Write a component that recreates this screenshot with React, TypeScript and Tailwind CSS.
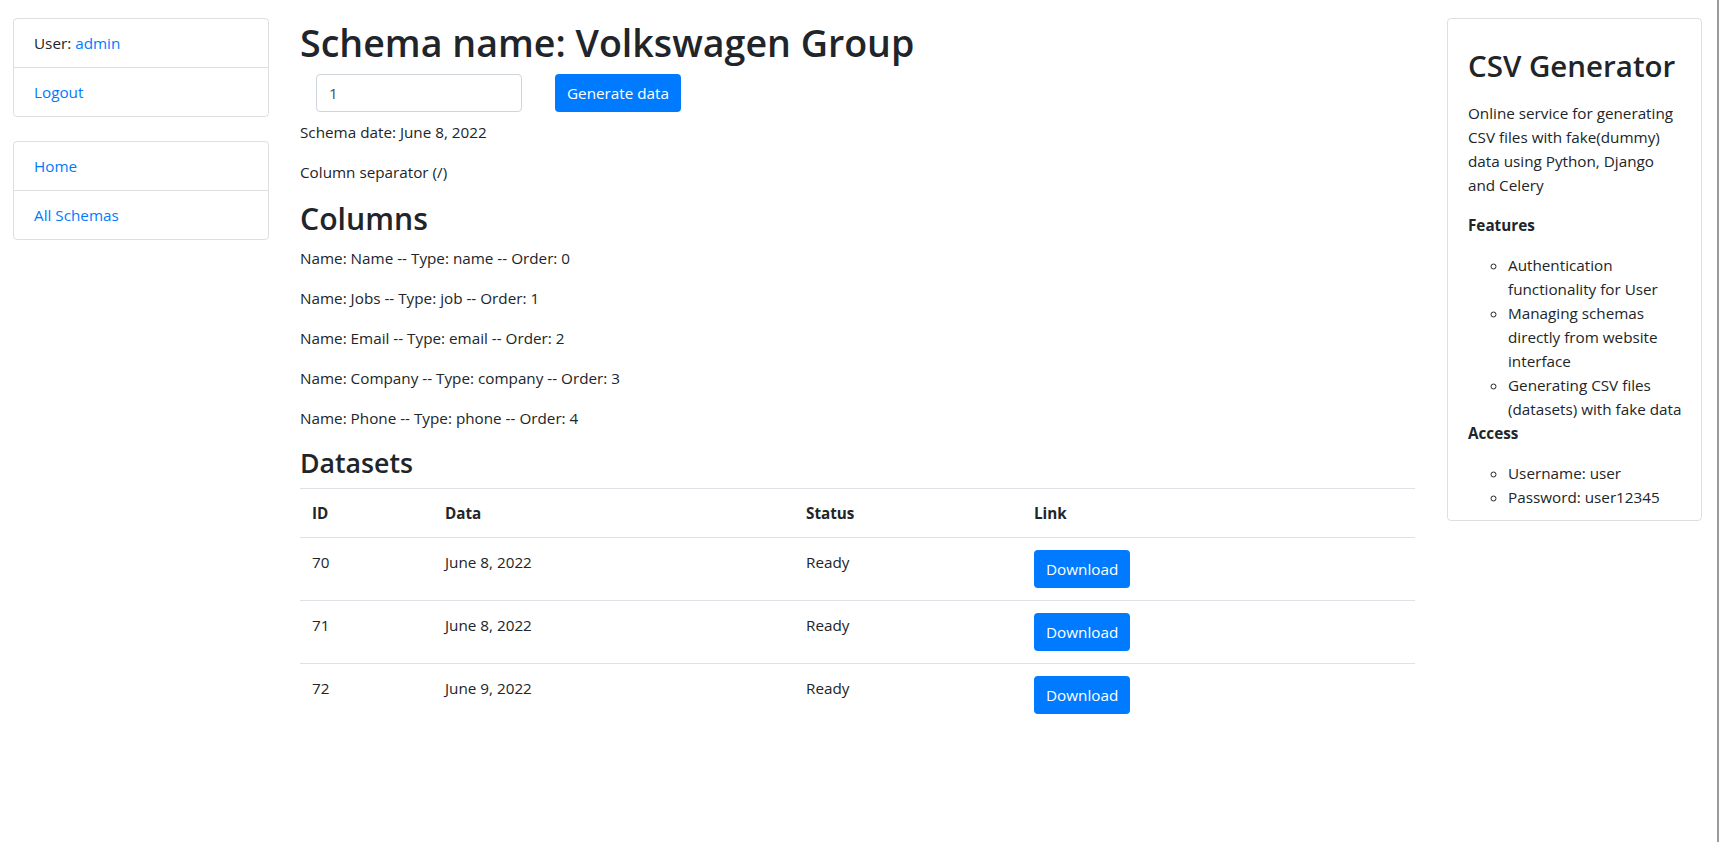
import React from 'react';

const columns = [
  { name: 'Name', type: 'name', order: 0 },
  { name: 'Jobs', type: 'job', order: 1 },
  { name: 'Email', type: 'email', order: 2 },
  { name: 'Company', type: 'company', order: 3 },
  { name: 'Phone', type: 'phone', order: 4 },
];

const datasets = [
  { id: 70, date: 'June 8, 2022', status: 'Ready' },
  { id: 71, date: 'June 8, 2022', status: 'Ready' },
  { id: 72, date: 'June 9, 2022', status: 'Ready' },
];

function ListGroup({ children }: { children: React.ReactNode[] }) {
  return (
    <div className="border border-black/[.125] rounded">
      {children.map((c, i) => (
        <div key={i} className={`px-5 py-3 ${i > 0 ? 'border-t border-black/[.125]' : ''}`}>
          {c}
        </div>
      ))}
    </div>
  );
}

export default function App() {
  return (
    <div className="flex h-[842px] bg-white text-[#212529] font-['Open_Sans','Noto_Sans',sans-serif] text-[15.25px] leading-6">
      <div className="flex w-[1717px] shrink-0 items-start pt-[18px]">
        {/* Left nav */}
        <aside className="ml-[13px] w-[256px] shrink-0">
          <ListGroup>
            {[
              <span key="u">User: <a className="text-[#007bff]">admin</a></span>,
              <a key="l" className="text-[#007bff]">Logout</a>,
            ]}
          </ListGroup>
          <div className="mt-6">
            <ListGroup>
              {[
                <a key="h" className="text-[#007bff]">Home</a>,
                <a key="s" className="text-[#007bff]">All Schemas</a>,
              ]}
            </ListGroup>
          </div>
        </aside>

        {/* Main */}
        <main className="ml-[31px] mt-px w-[1115px] shrink-0">
          <h1 className="text-[37.6px] leading-[48px] font-semibold mb-[7px]">Schema name: Volkswagen Group</h1>
          <div className="flex items-center">
            <input
              type="text"
              readOnly
              defaultValue="1"
              className="ml-4 w-[206px] h-[38px] border border-[#ced4da] rounded px-3 text-[#495057] outline-none"
            />
            <button className="ml-[33px] h-[38px] px-3 bg-[#007bff] text-white rounded">Generate data</button>
          </div>
          <p className="mt-2 mb-4">Schema date: June 8, 2022</p>
          <p className="mb-4">Column separator (/)</p>

          <h2 className="text-[30.2px] leading-[38.4px] font-semibold mb-2">Columns</h2>
          {columns.map(c => (
            <p key={c.order} className="mb-4">
              Name: {c.name} -- Type: {c.type} -- Order: {c.order}
            </p>
          ))}

          <h3 className="text-[26.7px] leading-[33.6px] font-semibold mb-2">Datasets</h3>
          <table className="w-full table-fixed border-collapse">
            <thead>
              <tr>
                <th className="w-[133px] text-left align-bottom font-bold p-3 border-t border-[#dee2e6]">ID</th>
                <th className="w-[361px] text-left align-bottom font-bold p-3 border-t border-[#dee2e6]">Data</th>
                <th className="w-[228px] text-left align-bottom font-bold p-3 border-t border-[#dee2e6]">Status</th>
                <th className="text-left align-bottom font-bold p-3 border-t border-[#dee2e6]">Link</th>
              </tr>
            </thead>
            <tbody>
              {datasets.map(d => (
                <tr key={d.id}>
                  <td className="p-3 align-top border-t border-[#dee2e6]">{d.id}</td>
                  <td className="p-3 align-top border-t border-[#dee2e6]">{d.date}</td>
                  <td className="p-3 align-top border-t border-[#dee2e6]">{d.status}</td>
                  <td className="p-3 align-top border-t border-[#dee2e6]">
                    <button className="h-[38px] px-3 bg-[#007bff] text-white rounded">Download</button>
                  </td>
                </tr>
              ))}
            </tbody>
          </table>
        </main>

        {/* Right info card */}
        <aside className="ml-[32px] w-[255px] shrink-0 border border-black/[.125] rounded px-5 pt-[28px] pb-[11px]">
          <h2 className="text-[29.5px] leading-[38.4px] font-semibold mb-4 whitespace-nowrap">CSV Generator</h2>
          <p className="mb-4">Online service for generating CSV files with fake(dummy) data using Python, Django and Celery</p>
          <p className="mb-4 font-bold">Features</p>
          <ul className="list-[circle] pl-10 -mr-3">
            <li>Authentication functionality for User</li>
            <li>Managing schemas directly from website interface</li>
            <li>Generating CSV files (datasets) with fake data</li>
          </ul>
          <p className="mb-4 font-bold">Access</p>
          <ul className="list-[circle] pl-10">
            <li>Username: user</li>
            <li>Password: user12345</li>
          </ul>
        </aside>
      </div>
      <div className="w-[2px] shrink-0 bg-[#9a9a9a]" />
    </div>
  );
}
